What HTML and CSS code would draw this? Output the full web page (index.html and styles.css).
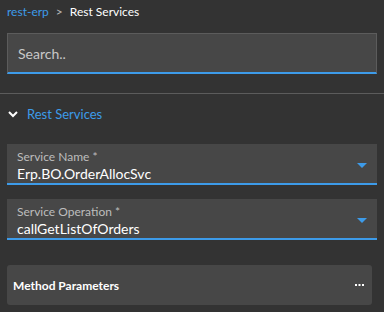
FILE: index.html
```html
<!DOCTYPE html>
<html lang="en">
<head>
<meta charset="UTF-8">
<title>Rest Services</title>
<link rel="stylesheet" href="styles.css">
</head>
<body>
    <div class="crumbs">
        <a href="#">rest-erp</a><span class="sep">&gt;</span><span class="here">Rest Services</span>
    </div>
    <div class="search">
        <input type="text" placeholder="Search..">
    </div>
    <div class="section">
        <div class="section-title">
            <svg width="10" height="7" viewBox="0 0 10 7"><path d="M1 1l4 4 4-4" fill="none" stroke="#fff" stroke-width="2"/></svg>
            <span>Rest Services</span>
        </div>
        <div class="field">
            <label>Service Name *</label>
            <div class="value">Erp.BO.OrderAllocSvc</div>
            <span class="caret"></span>
        </div>
        <div class="field">
            <label>Service Operation *</label>
            <div class="value">callGetListOfOrders</div>
            <span class="caret"></span>
        </div>
        <div class="params">
            <span>Method Parameters</span>
            <svg class="dots" width="9" height="2" viewBox="0 0 9 2"><rect x="0" y="0" width="2" height="2" fill="#fff"/><rect x="3.5" y="0" width="2" height="2" fill="#fff"/><rect x="7" y="0" width="2" height="2" fill="#fff"/></svg>
        </div>
    </div>
</body>
</html>
```
FILE: styles.css
```css
body {
    margin: 0;
    background-color: #333333;
    font-family: Lato, "Open Sans", sans-serif;
    color: #fff;
    height: 312px;
    overflow: hidden;
}
.crumbs {
    padding: 4px 7px 0 7px;
    height: 21px;
    font-size: 12px;
    line-height: 16px;
}
.crumbs a {
    color: #3d9be9;
    text-decoration: none;
}
.crumbs .sep {
    color: #bbb;
    margin: 0 7px;
}
.search {
    padding: 8px 7px 0 7px;
}
.search input {
    width: 100%;
    box-sizing: border-box;
    height: 41px;
    background-color: #474747;
    border: 1px solid #5c5c5c;
    border-bottom: 2px solid #3d9be9;
    padding: 0 10px;
    font-family: inherit;
    font-size: 14px;
    color: #fff;
    outline: none;
}
.search input::placeholder {
    color: #c8c8c8;
}
.section {
    margin-top: 19px;
    border-top: 1px solid #5c5c5c;
    padding: 0 7px;
}
.section-title {
    display: flex;
    align-items: center;
    height: 40px;
    padding-left: 1px;
    font-size: 13px;
    color: #3d9be9;
}
.section-title svg {
    margin-right: 9px;
}
.field {
    position: relative;
    margin-top: 10px;
    height: 41px;
    background-color: #474747;
    border-bottom: 2px solid #3d9be9;
    padding: 5px 10px 0 10px;
    box-sizing: border-box;
}
.field + .field {
    margin-top: 14px;
}
.field label {
    display: block;
    font-size: 12px;
    line-height: 15px;
    height: 15px;
    color: #bdbdbd;
}
.field .value {
    font-size: 14px;
    line-height: 17px;
    margin-top: 1px;
}
.caret {
    position: absolute;
    right: 10px;
    top: 19px;
    border-left: 5px solid transparent;
    border-right: 5px solid transparent;
    border-top: 5px solid #3d9be9;
}
.params {
    display: flex;
    justify-content: space-between;
    align-items: center;
    margin: 25px 5px 0 0;
    height: 40px;
    padding: 0 8px 0 6px;
    background-color: #474747;
    border-radius: 3px;
    font-size: 12px;
    font-weight: bold;
}
```
